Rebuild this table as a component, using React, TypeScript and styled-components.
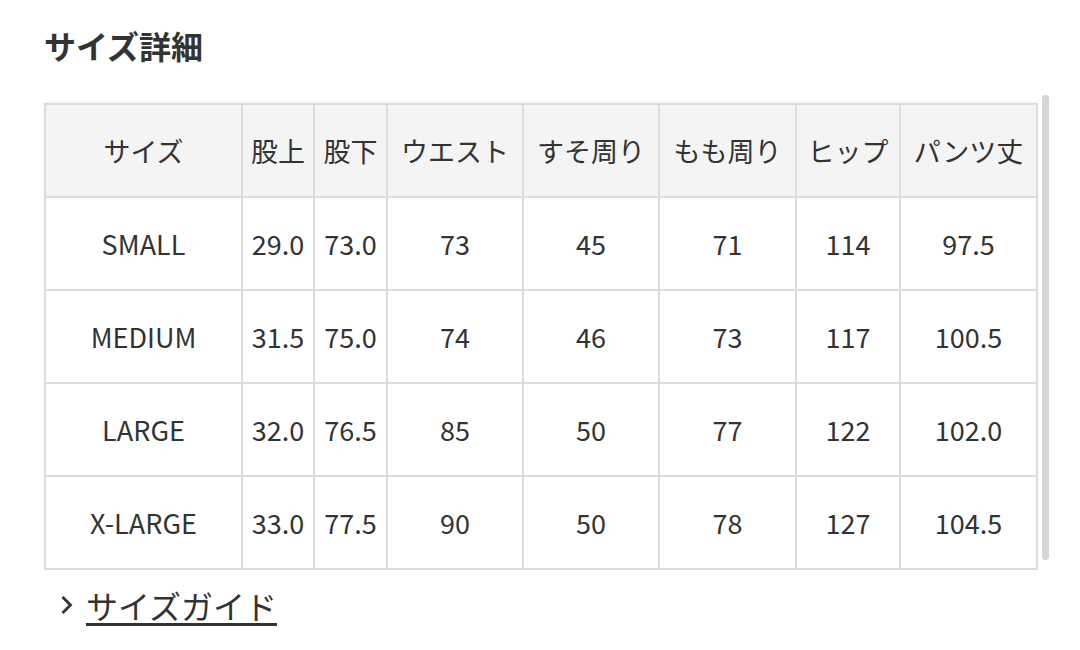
import React from 'react'
import styled, { createGlobalStyle } from 'styled-components'

const GlobalStyle = createGlobalStyle`
  body {
    margin: 0;
    background: #fff;
    font-family: "Noto Sans CJK JP", "Noto Sans", sans-serif;
    color: #333;
  }
`

const headers = ['サイズ', '股上', '股下', 'ウエスト', 'すそ周り', 'もも周り', 'ヒップ', 'パンツ丈']
const widths = [197, 72, 73, 136, 136, 137, 104, 137]

const rows: string[][] = [
  ['SMALL', '29.0', '73.0', '73', '45', '71', '114', '97.5'],
  ['MEDIUM', '31.5', '75.0', '74', '46', '73', '117', '100.5'],
  ['LARGE', '32.0', '76.5', '85', '50', '77', '122', '102.0'],
  ['X-LARGE', '33.0', '77.5', '90', '50', '78', '127', '104.5'],
]

const App = () => {
  return (
    <Page>
      <GlobalStyle />
      <Title>サイズ詳細</Title>
      <Scroller>
        <Table>
          <colgroup>
            {widths.map((w, i) => (
              <col key={i} style={{ width: w }} />
            ))}
          </colgroup>
          <thead>
            <Row>
              {headers.map((h) => (
                <Th key={h}>{h}</Th>
              ))}
            </Row>
          </thead>
          <tbody>
            {rows.map((r) => (
              <Row key={r[0]}>
                {r.map((c, i) => (
                  <Td key={i}>{c}</Td>
                ))}
              </Row>
            ))}
          </tbody>
        </Table>
        <ScrollBar />
      </Scroller>
      <GuideLink href="#">
        <Chevron viewBox="0 0 13 20">
          <path d="M2.5 2 L10.5 10 L2.5 18" fill="none" stroke="#333" strokeWidth="2.8" />
        </Chevron>
        <LinkText>サイズガイド</LinkText>
      </GuideLink>
    </Page>
  )
}

export default App

const Page = styled.div`
  min-height: 650px;
  box-sizing: border-box;
  padding: 21px 0 0 44px;
`

const Title = styled.h2`
  margin: 0;
  font-size: 32px;
  line-height: 48px;
  font-weight: 700;
  color: #333;
`

const Scroller = styled.div`
  display: flex;
  align-items: flex-start;
  gap: 4px;
  margin-top: 26px;
`

const Table = styled.table`
  border-collapse: collapse;
  table-layout: fixed;
  width: 992px;
  border: 2px solid #dcdcdc;
  box-shadow: 0 -2px 2px rgba(0, 0, 0, 0.03);
  margin-top: 8px;
`

const Row = styled.tr`
  height: 93px;
`

const Th = styled.th`
  border: 2px solid #dcdcdc;
  background: #f4f4f4;
  font-weight: 400;
  font-size: 27px;
  color: #333;
  text-align: center;
  padding: 0;
  white-space: nowrap;
`

const Td = styled.td`
  border: 2px solid #dcdcdc;
  font-size: 27px;
  color: #333;
  text-align: center;
  padding: 0;
  white-space: nowrap;
`

const ScrollBar = styled.div`
  width: 7px;
  height: 465px;
  border-radius: 4px;
  background: #d6d6d6;
  flex-shrink: 0;
`

const GuideLink = styled.a`
  display: inline-flex;
  align-items: center;
  gap: 13px;
  margin: 17px 0 0 16px;
  color: #333;
  font-size: 32px;
  line-height: 40px;
  text-decoration: none;
`

const LinkText = styled.span`
  display: inline-block;
  line-height: 36px;
  border-bottom: 3px solid #333;
  margin-bottom: -4px;
`

const Chevron = styled.svg`
  width: 13px;
  height: 20px;
`
